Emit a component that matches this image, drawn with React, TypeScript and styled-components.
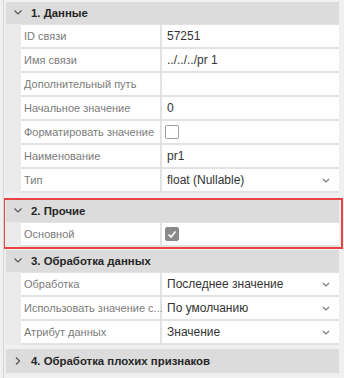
import React from 'react'
import styled, { createGlobalStyle } from 'styled-components'

const GlobalStyle = createGlobalStyle`
  html, body {
    margin: 0;
    padding: 0;
    background: #f0f0f0;
  }
  body {
    font-family: 'Liberation Sans', Arial, sans-serif;
  }
`

const Panel = styled.div`
  box-sizing: border-box;
  width: 341px;
  height: 378px;
  margin-left: 3px;
  border-left: 1px solid #d4d4d4;
  padding: 2px 5px 0 2px;
  overflow: hidden;
`

const Section = styled.div<{ $top?: number }>`
  margin-top: ${p => p.$top ?? 0}px;
`

const Highlight = styled.div`
  margin: 5px -4px 0 -3px;
  border: 2px solid #e94444;
  padding: 0 2px 0 1px;
`

const Header = styled.div<{ $tall?: boolean }>`
  display: flex;
  align-items: center;
  gap: 6px;
  height: ${p => (p.$tall ? 24 : 22)}px;
  padding-left: 5px;
  background: #dcdcdc;
  color: #262626;
  font-size: 11.4px;
  font-weight: 700;
  white-space: nowrap;
`

const Body = styled.div`
  display: flex;
`

const Indent = styled.div`
  width: 15px;
  background: #eaeaea;
  flex-shrink: 0;
`

const Rows = styled.div`
  flex: 1;
  display: grid;
  grid-template-columns: 139px 1fr;
  gap: 2px;
  padding: 1px 0 2px;
  background: #e2e2e2;
`

const Label = styled.div`
  height: 22px;
  padding: 0 4px 0 3px;
  background: #fff;
  color: #7b7b7b;
  font-size: 11px;
  line-height: 22px;
  white-space: nowrap;
`

const Value = styled.div`
  display: flex;
  align-items: center;
  height: 22px;
  padding: 0 9px 0 5px;
  background: #fff;
  color: #333;
  font-size: 12px;
  white-space: nowrap;
`

const ValueText = styled.span`
  flex: 1;
`

const Box = styled.span<{ $checked?: boolean }>`
  display: inline-flex;
  align-items: center;
  justify-content: center;
  box-sizing: border-box;
  width: 14px;
  height: 14px;
  margin-left: -2px;
  border-radius: 2px;
  border: 1px solid ${p => (p.$checked ? '#8a8a8a' : '#a0a0a0')};
  background: ${p => (p.$checked ? '#8a8a8a' : '#fff')};
`

const Caret = ({ open }: { open: boolean }) =>
  open ? (
    <svg width="14" height="8" viewBox="0 0 14 8">
      <path d="M3.5 1.5 L7 5 L10.5 1.5" fill="none" stroke="#555" strokeWidth="1.2" />
    </svg>
  ) : (
    <svg width="14" height="10" viewBox="0 0 14 10">
      <path d="M5 1.5 L8.5 5 L5 8.5" fill="none" stroke="#555" strokeWidth="1.2" />
    </svg>
  )

const DropArrow = () => (
  <svg width="8" height="5" viewBox="0 0 8 5">
    <path d="M1 1 L4 4 L7 1" fill="none" stroke="#777" strokeWidth="1.1" />
  </svg>
)

const Check = () => (
  <svg width="10" height="9" viewBox="0 0 10 9">
    <path d="M1.5 4.5 L4 7 L8.5 1.5" fill="none" stroke="#fff" strokeWidth="1.6" />
  </svg>
)

type Field = {
  label: string
  value?: string
  select?: boolean
  checkbox?: boolean
  checked?: boolean
}

const FieldRow = ({ f }: { f: Field }) => (
  <>
    <Label>{f.label}</Label>
    <Value>
      {f.checkbox ? (
        <Box $checked={f.checked}>{f.checked && <Check />}</Box>
      ) : (
        <ValueText>{f.value}</ValueText>
      )}
      {f.select && <DropArrow />}
    </Value>
  </>
)

type GroupProps = { title: string; fields?: Field[]; open?: boolean; top?: number }

const Group = ({ title, fields, open = true, top }: GroupProps) => (
  <Section $top={top}>
    <Header $tall={!open}>
      <Caret open={open} />
      {title}
    </Header>
    {open && fields && (
      <Body>
        <Indent />
        <Rows>
          {fields.map(f => (
            <FieldRow key={f.label} f={f} />
          ))}
        </Rows>
      </Body>
    )}
  </Section>
)

const data: Field[] = [
  { label: 'ID связи', value: '57251' },
  { label: 'Имя связи', value: '../../../pr 1' },
  { label: 'Дополнительный путь', value: '' },
  { label: 'Начальное значение', value: '0' },
  { label: 'Форматировать значение', checkbox: true },
  { label: 'Наименование', value: 'pr1' },
  { label: 'Тип', value: 'float (Nullable)', select: true },
]

const other: Field[] = [{ label: 'Основной', checkbox: true, checked: true }]

const processing: Field[] = [
  { label: 'Обработка', value: 'Последнее значение', select: true },
  { label: 'Использовать значение с...', value: 'По умолчанию', select: true },
  { label: 'Атрибут данных', value: 'Значение', select: true },
]

export default function App() {
  return (
    <>
      <GlobalStyle />
      <Panel>
        <Group title="1. Данные" fields={data} />
        <Highlight>
          <Group title="2. Прочие" fields={other} />
        </Highlight>
        <Group title="3. Обработка данных" fields={processing} top={1} />
        <Group title="4. Обработка плохих признаков" open={false} top={4} />
      </Panel>
    </>
  )
}
